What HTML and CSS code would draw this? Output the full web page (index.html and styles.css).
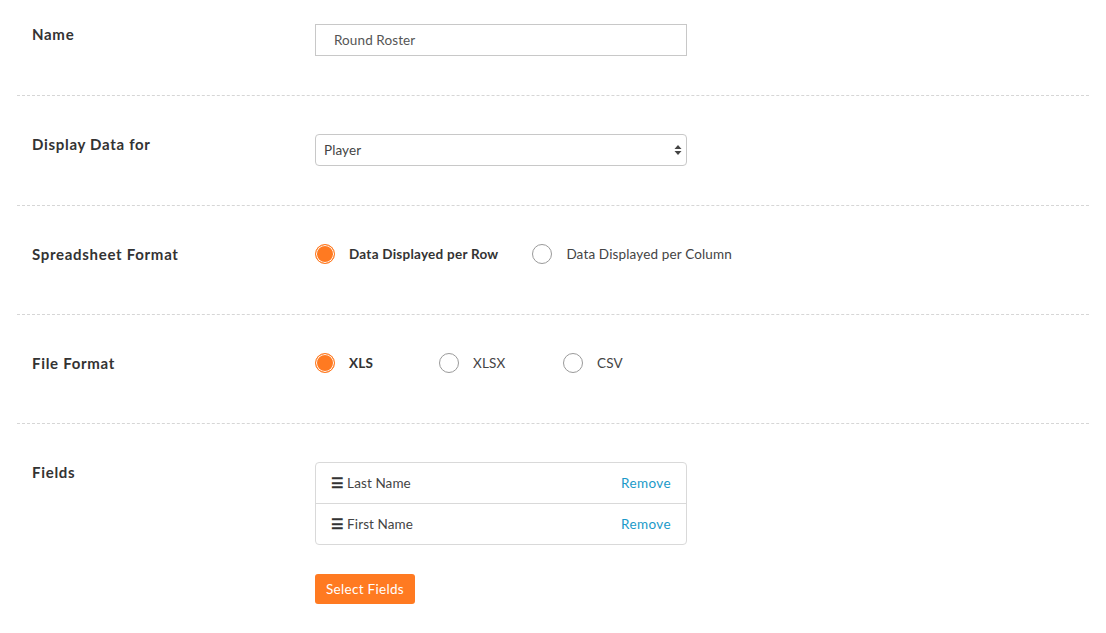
FILE: index.html
```html
<!DOCTYPE html>
<html lang="en">
<head>
  <meta charset="UTF-8">
  <title>Report Settings</title>
  <link rel="stylesheet" href="styles.css">
</head>
<body>
  <form class="report-form">
    <!-- Name -->
    <div class="field field-first">
      <label class="field-label" for="name">Name</label>
      <div class="field-control">
        <input id="name" class="text-input" type="text" value="Round Roster">
      </div>
    </div>

    <!-- Display data -->
    <div class="field">
      <label class="field-label" for="display">Display Data for</label>
      <div class="field-control">
        <div class="select-wrap">
          <select id="display" class="select-input">
            <option>Player</option>
            <option>Team</option>
          </select>
          <svg class="select-arrows" width="8" height="12" viewBox="0 0 8 12">
            <path d="M4 1 L7.5 5 L0.5 5 Z" fill="#444"/>
            <path d="M4 11 L7.5 7 L0.5 7 Z" fill="#444"/>
          </svg>
        </div>
      </div>
    </div>

    <!-- Spreadsheet format -->
    <div class="field">
      <div class="field-label">Spreadsheet Format</div>
      <div class="radio-group">
        <label class="radio-option">
          <input type="radio" name="sheet" checked>
          <span class="radio-dot"></span>
          <span class="radio-text">Data Displayed per Row</span>
        </label>
        <label class="radio-option">
          <input type="radio" name="sheet">
          <span class="radio-dot"></span>
          <span class="radio-text">Data Displayed per Column</span>
        </label>
      </div>
    </div>

    <!-- File format -->
    <div class="field">
      <div class="field-label">File Format</div>
      <div class="radio-group">
        <label class="radio-option radio-fixed">
          <input type="radio" name="file" checked>
          <span class="radio-dot"></span>
          <span class="radio-text">XLS</span>
        </label>
        <label class="radio-option radio-fixed">
          <input type="radio" name="file">
          <span class="radio-dot"></span>
          <span class="radio-text">XLSX</span>
        </label>
        <label class="radio-option radio-fixed">
          <input type="radio" name="file">
          <span class="radio-dot"></span>
          <span class="radio-text">CSV</span>
        </label>
      </div>
    </div>

    <!-- Fields -->
    <div class="field field-last">
      <div class="field-label">Fields</div>
      <div class="field-control">
        <ul class="field-list">
          <li>
            <span class="field-name"><span class="handle">&#9776;</span>Last Name</span>
            <a href="#" class="remove-link">Remove</a>
          </li>
          <li>
            <span class="field-name"><span class="handle">&#9776;</span>First Name</span>
            <a href="#" class="remove-link">Remove</a>
          </li>
        </ul>
        <button type="button" class="btn-orange">Select Fields</button>
      </div>
    </div>
  </form>
</body>
</html>
```

FILE: styles.css
```css
body {
  margin: 0;
  padding: 0;
  background: #fff;
  font-family: Lato, "Open Sans", Arial, sans-serif;
  color: #333;
}

.report-form {
  margin: 0 17px;
}

.field {
  display: flex;
  padding: 38px 15px 39px;
  border-bottom: 1px dashed #d6d6d6;
}

.field-first {
  padding-top: 24px;
}

.field-last {
  border-bottom: none;
}

.field-label {
  width: 283px;
  flex-shrink: 0;
  font-size: 15px;
  line-height: 21px;
  font-weight: 700;
  letter-spacing: 0.7px;
  color: #333;
}

.field-control {
  width: 372px;
}

.text-input {
  box-sizing: border-box;
  width: 372px;
  height: 32px;
  margin: 0;
  padding: 0 18px;
  border: 1px solid #c8c8c8;
  border-radius: 0;
  font-family: inherit;
  font-size: 13.5px;
  letter-spacing: 0.1px;
  color: #555;
  outline: none;
}

.select-wrap {
  position: relative;
  width: 372px;
}

.select-input {
  box-sizing: border-box;
  width: 100%;
  height: 32px;
  margin: 0;
  padding: 0 8px;
  border: 1px solid #c8c8c8;
  border-radius: 4px;
  background: #fff;
  font-family: inherit;
  font-size: 13.5px;
  letter-spacing: 0.1px;
  color: #444;
  -webkit-appearance: none;
  appearance: none;
  outline: none;
}

.select-arrows {
  position: absolute;
  right: 5px;
  top: 10px;
}

.radio-group {
  display: flex;
  height: 31px;
  white-space: nowrap;
}

.radio-option {
  display: flex;
  align-items: center;
  height: 20px;
  margin-right: 34px;
  cursor: pointer;
}

.radio-fixed {
  width: 124px;
  margin-right: 0;
}

.radio-option input {
  display: none;
}

.radio-dot {
  box-sizing: border-box;
  flex-shrink: 0;
  width: 20px;
  height: 20px;
  margin-right: 14px;
  border: 1px solid #9a9a9a;
  border-radius: 50%;
  background: #fff;
}

.radio-option input:checked + .radio-dot {
  border-color: #ff7a21;
  background: #ff7a21;
  box-shadow: inset 0 0 0 1px #fff;
}

.radio-text {
  font-size: 13.5px;
  line-height: 18px;
  letter-spacing: 0.15px;
  color: #444;
}

.radio-option input:checked ~ .radio-text {
  font-weight: 700;
  letter-spacing: 0.25px;
  color: #333;
}

.field-list {
  list-style: none;
  margin: 0;
  padding: 0;
  border: 1px solid #d9d9d9;
  border-radius: 4px;
}

.field-list li {
  display: flex;
  justify-content: space-between;
  align-items: center;
  height: 40px;
  padding: 0 15px;
  font-size: 13.5px;
  line-height: 18px;
  letter-spacing: 0.1px;
  color: #444;
}

.field-list li + li {
  border-top: 1px solid #d9d9d9;
}

.handle {
  margin-right: 3px;
  font-size: 14px;
  font-weight: 700;
  color: #333;
}

.remove-link {
  color: #1b9ac9;
  letter-spacing: 0.4px;
  text-decoration: none;
}

.btn-orange {
  display: block;
  margin-top: 29px;
  height: 30px;
  padding: 0 11px;
  border: none;
  border-radius: 3px;
  background: #ff7a21;
  color: #fff;
  font-family: inherit;
  font-size: 13.5px;
  letter-spacing: 0.3px;
  cursor: pointer;
}
```
